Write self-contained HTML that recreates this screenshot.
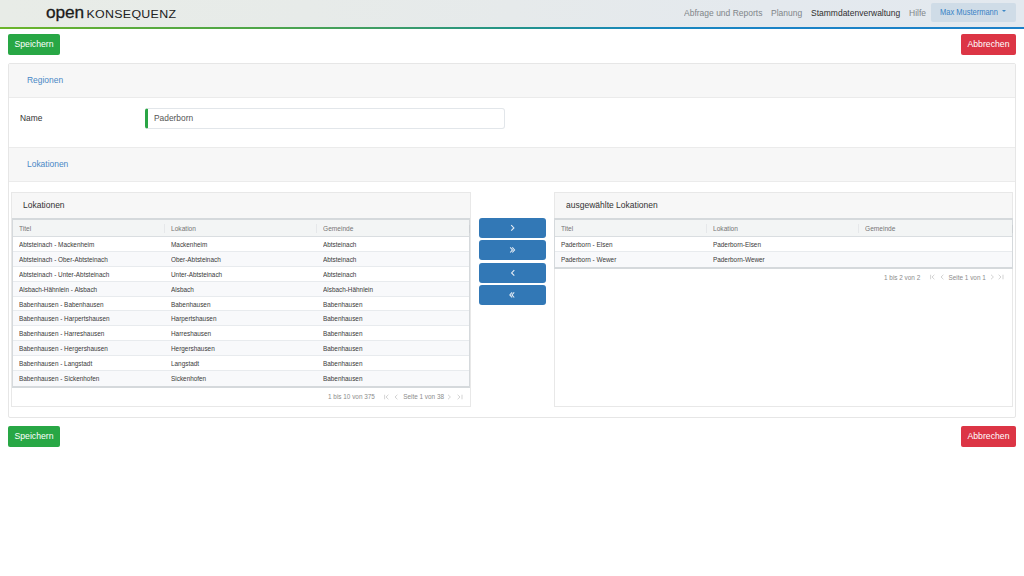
<!DOCTYPE html>
<html><head><meta charset="utf-8">
<style>
*{box-sizing:border-box;margin:0;padding:0}
html,body{width:1024px;height:576px;overflow:hidden;background:#fff;font-family:"Liberation Sans",sans-serif;color:#333}
.abs{position:absolute}
#hdr{position:absolute;left:0;top:0;width:1024px;height:27px;background:linear-gradient(90deg,#e8ece7 0%,#e7ebe9 30%,#e6eaeb 50%,#e4e9ee 75%,#e3e9ef 100%)}
#hline{position:absolute;left:0;top:27px;width:1024px;height:2px;background:linear-gradient(90deg,#6cb52b 0%,#5aab3c 12.5%,#4fa648 25%,#3e9d66 37.5%,#239489 50%,#1988bc 62.5%,#1a83c6 75%,#1c80c8 100%)}
.logo1{position:absolute;left:46px;top:2.2px;font-size:17.3px;line-height:20px;color:#1b1b1b;letter-spacing:-0.1px;-webkit-text-stroke:0.3px #1b1b1b}
.logo2{position:absolute;left:86.5px;top:6.6px;font-size:12.4px;line-height:14px;color:#222;letter-spacing:0.3px;transform:scaleY(0.91);transform-origin:0 11px}
.nav{position:absolute;top:8.1px;font-size:8.5px;line-height:11px;color:#7f8589;white-space:nowrap;transform:scaleY(1.08);transform-origin:0 8px}
.nav.act{color:#2f2f2f}
#user{position:absolute;left:930.5px;top:3px;width:85.5px;height:18.5px;background:#cfdce7;border-radius:2px;font-size:7.5px;color:#3883c6;line-height:18.5px;padding-left:9.5px;white-space:nowrap}
#user .ut{display:inline-block;position:relative;top:0.9px;transform:scaleY(1.14);transform-origin:0 12.5px}
#user .caret{position:absolute;left:71.5px;top:7px;width:0;height:0;border-left:2px solid transparent;border-right:2px solid transparent;border-top:2.5px solid #3d88c6}
.btn{position:absolute;height:20.5px;border-radius:2px;color:#fff;font-size:8.7px;line-height:20.5px;text-align:center;white-space:nowrap}
.bt{display:inline-block;transform:scaleY(1.06)}
.green{background:#28a745}
.red{background:#dc3545}
#outer{position:absolute;left:8px;top:63px;width:1008px;height:355px;border:1px solid #e6e6e6;border-radius:2px}
.phead{position:absolute;left:0;width:1006px;background:#f7f7f7;border-bottom:1px solid #ebebeb}
.ptitle{position:absolute;left:18px;font-size:8.45px;color:#4a88c6;line-height:12px;transform:scaleY(1.08);transform-origin:0 9px}
.lbl{position:absolute;font-size:8.4px;color:#333;line-height:12px;transform:scaleY(1.1);transform-origin:0 9px}
#inp{position:absolute;left:136px;top:44px;width:360px;height:20.5px;border:1px solid #e2e6ea;border-left:3px solid #2aa545;border-radius:3px;background:#fff}
#inp span{position:absolute;left:6px;top:3px;font-size:8.4px;color:#555;line-height:12px;transform:scaleY(1.1);transform-origin:0 9px}
.grid{position:absolute;top:128px;width:460px;height:215px;border:1px solid #e8e8e8;background:#fff}
.ghead{position:absolute;left:0;top:0;width:100%;height:26px;background:#f7f7f7}
.gtitle{position:absolute;left:11px;top:6.2px;font-size:8.5px;color:#333;line-height:12px;transform:scaleY(1.06);transform-origin:0 9px}
.tbl{position:absolute;left:0px;top:25px;width:458px;border:1px solid #d5d9dc;border-width:2px 1px 2px 1px}
.th{height:17px;background:#f3f5f5;border-bottom:1px solid #dadee1;position:relative}
.tr{height:14.9px;border-bottom:1px solid #e8ebee;position:relative;background:#fff}
.tr.alt{background:#f8f9fb}
.c{position:absolute;top:0;font-size:6.4px;line-height:15px;color:#3a3a3a;white-space:nowrap;transform:scaleY(1.1);transform-origin:0 50%}
.th .c{line-height:17px;color:#767676;font-size:6.6px}
.grip{position:absolute;right:-1px;top:4.5px;width:1px;height:8px;background:#ccd0d3}
.sep{position:absolute;top:4px;width:1px;height:8.5px;background:#e6e8ea}
.pager{position:absolute;font-size:6.4px;color:#8c8c8c;line-height:10px;white-space:nowrap}
.pic{position:absolute;fill:none;stroke:#c8c8c8;stroke-width:0.8}
.mbtn{position:absolute;left:470px;width:67px;height:20.2px;background:#3278b6;border-radius:3px;color:#fff;font-size:9px;line-height:20px;text-align:center}
</style></head>
<body>
<div id="hdr"></div><div id="hline"></div>
<div class="logo1">open</div>
<div class="logo2">KONSEQUENZ</div>
<div class="nav" style="left:684px">Abfrage und Reports</div>
<div class="nav" style="left:771px">Planung</div>
<div class="nav act" style="left:811px">Stammdatenverwaltung</div>
<div class="nav" style="left:909px">Hilfe</div>
<div id="user"><span class="ut">Max Mustermann</span><span class="caret"></span></div>

<div class="btn green" style="left:8px;top:34px;width:52px"><span class="bt">Speichern</span></div>
<div class="btn red" style="left:961px;top:34px;width:55px"><span class="bt">Abbrechen</span></div>

<div id="outer">
  <div class="phead" style="top:0;height:34px"><div class="ptitle" style="top:10px">Regionen</div></div>
  <div class="lbl" style="left:11px;top:47.6px">Name</div>
  <div id="inp"><span>Paderborn</span></div>
  <div class="phead" style="top:83px;height:35px;border-top:1px solid #ebebeb"><div class="ptitle" style="top:10.2px">Lokationen</div></div>

  <div class="grid" style="left:2px">
    <div class="ghead"><div class="gtitle">Lokationen</div></div>
    <div class="tbl">
      <div class="th"><span class="c" style="left:6px">Titel</span><span class="sep" style="left:151px"></span><span class="c" style="left:158px">Lokation</span><span class="sep" style="left:303px"></span><span class="c" style="left:310px">Gemeinde</span><span class="grip"></span></div>
      <div class="tr"><span class="c" style="left:6px">Abtsteinach - Mackenheim</span><span class="c" style="left:158px">Mackenheim</span><span class="c" style="left:310px">Abtsteinach</span></div>
      <div class="tr alt"><span class="c" style="left:6px">Abtsteinach - Ober-Abtsteinach</span><span class="c" style="left:158px">Ober-Abtsteinach</span><span class="c" style="left:310px">Abtsteinach</span></div>
      <div class="tr"><span class="c" style="left:6px">Abtsteinach - Unter-Abtsteinach</span><span class="c" style="left:158px">Unter-Abtsteinach</span><span class="c" style="left:310px">Abtsteinach</span></div>
      <div class="tr alt"><span class="c" style="left:6px">Alsbach-Hähnlein - Alsbach</span><span class="c" style="left:158px">Alsbach</span><span class="c" style="left:310px">Alsbach-Hähnlein</span></div>
      <div class="tr"><span class="c" style="left:6px">Babenhausen - Babenhausen</span><span class="c" style="left:158px">Babenhausen</span><span class="c" style="left:310px">Babenhausen</span></div>
      <div class="tr alt"><span class="c" style="left:6px">Babenhausen - Harpertshausen</span><span class="c" style="left:158px">Harpertshausen</span><span class="c" style="left:310px">Babenhausen</span></div>
      <div class="tr"><span class="c" style="left:6px">Babenhausen - Harreshausen</span><span class="c" style="left:158px">Harreshausen</span><span class="c" style="left:310px">Babenhausen</span></div>
      <div class="tr alt"><span class="c" style="left:6px">Babenhausen - Hergershausen</span><span class="c" style="left:158px">Hergershausen</span><span class="c" style="left:310px">Babenhausen</span></div>
      <div class="tr"><span class="c" style="left:6px">Babenhausen - Langstadt</span><span class="c" style="left:158px">Langstadt</span><span class="c" style="left:310px">Babenhausen</span></div>
      <div class="tr alt" style="border-bottom:0"><span class="c" style="left:6px">Babenhausen - Sickenhofen</span><span class="c" style="left:158px">Sickenhofen</span><span class="c" style="left:310px">Babenhausen</span></div>
    </div>
    <div class="pager" style="left:316px;top:199px">1 bis 10 von 375</div>
    <svg class="pic" style="left:372px;top:200.5px" width="6" height="6" viewBox="0 0 6 6"><path d="M0.6 0.75V5.25M4.4 0.75L2 3L4.4 5.25" /></svg>
    <svg class="pic" style="left:382px;top:200.5px" width="6" height="6" viewBox="0 0 6 6"><path d="M3.4 0.75L1 3L3.4 5.25" /></svg>
    <div class="pager" style="left:391.2px;top:199px">Seite 1 von 38</div>
    <svg class="pic" style="left:434.5px;top:200.5px" width="6" height="6" viewBox="0 0 6 6"><path d="M1 0.75L3.4 3L1 5.25" /></svg>
    <svg class="pic" style="left:445px;top:200.5px" width="6" height="6" viewBox="0 0 6 6"><path d="M0.6 0.75L3 3L0.6 5.25M5 0.75V5.25" /></svg>
  </div>

  <div class="mbtn" style="top:154px"><svg width="6" height="8" viewBox="0 0 6 8" style="position:absolute;left:31px;top:6px"><path d="M1.2 1.1L3.9 3.9L1.2 6.7" fill="none" stroke="#e6edf5" stroke-width="1.1"/></svg></div>
  <div class="mbtn" style="top:176.2px"><svg width="8" height="8" viewBox="0 0 8 8" style="position:absolute;left:30px;top:6px"><path d="M1.2 1.3L3.5 3.9L1.2 6.5M3.3 1.3L5.6 3.9L3.3 6.5" fill="none" stroke="#e6edf5" stroke-width="1.05"/></svg></div>
  <div class="mbtn" style="top:198.6px"><svg width="6" height="8" viewBox="0 0 6 8" style="position:absolute;left:31px;top:6px"><path d="M4.3 1.1L1.6 3.9L4.3 6.7" fill="none" stroke="#e6edf5" stroke-width="1.1"/></svg></div>
  <div class="mbtn" style="top:221px"><svg width="8" height="8" viewBox="0 0 8 8" style="position:absolute;left:30px;top:6px"><path d="M5.2 1.3L2.9 3.9L5.2 6.5M3.1 1.3L0.8 3.9L3.1 6.5" fill="none" stroke="#e6edf5" stroke-width="1.05"/></svg></div>

  <div class="grid" style="left:545px;width:459px">
    <div class="ghead"><div class="gtitle">ausgewählte Lokationen</div></div>
    <div class="tbl" style="left:-1px;width:459px">
      <div class="th"><span class="c" style="left:6px">Titel</span><span class="sep" style="left:151px"></span><span class="c" style="left:158px">Lokation</span><span class="sep" style="left:303px"></span><span class="c" style="left:310px">Gemeinde</span><span class="grip"></span></div>
      <div class="tr"><span class="c" style="left:6px">Paderborn - Elsen</span><span class="c" style="left:158px">Paderborn-Elsen</span></div>
      <div class="tr alt" style="border-bottom:0"><span class="c" style="left:6px">Paderborn - Wewer</span><span class="c" style="left:158px">Paderborn-Wewer</span></div>
    </div>
    <div class="pager" style="left:329px;top:79.5px">1 bis 2 von 2</div>
    <svg class="pic" style="left:375px;top:81px" width="6" height="6" viewBox="0 0 6 6"><path d="M0.6 0.75V5.25M4.4 0.75L2 3L4.4 5.25" /></svg>
    <svg class="pic" style="left:385px;top:81px" width="6" height="6" viewBox="0 0 6 6"><path d="M3.4 0.75L1 3L3.4 5.25" /></svg>
    <div class="pager" style="left:393.5px;top:79.5px">Seite 1 von 1</div>
    <svg class="pic" style="left:435px;top:81px" width="6" height="6" viewBox="0 0 6 6"><path d="M1 0.75L3.4 3L1 5.25" /></svg>
    <svg class="pic" style="left:443px;top:81px" width="6" height="6" viewBox="0 0 6 6"><path d="M0.6 0.75L3 3L0.6 5.25M5 0.75V5.25" /></svg>
  </div>
</div>

<div class="btn green" style="left:8px;top:426px;width:52px"><span class="bt">Speichern</span></div>
<div class="btn red" style="left:961px;top:426px;width:55px"><span class="bt">Abbrechen</span></div>
</body></html>
